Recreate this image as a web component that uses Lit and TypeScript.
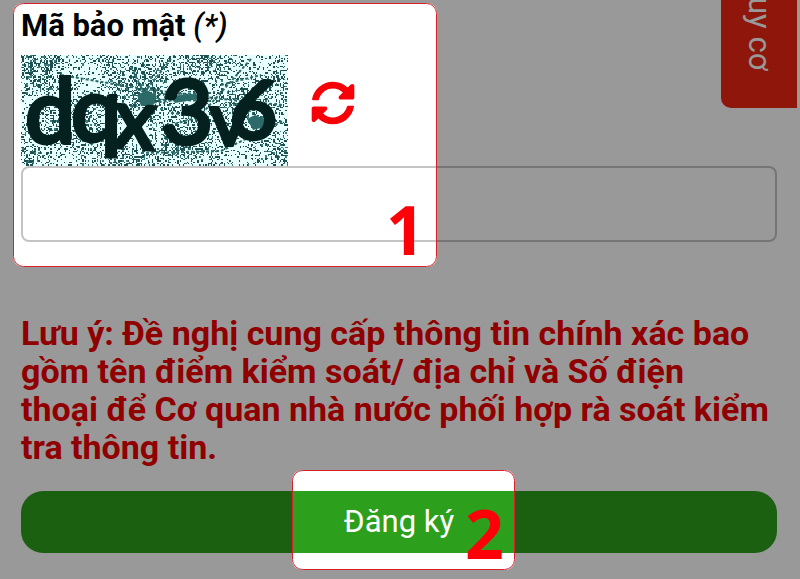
import { LitElement, html, svg, css } from "lit";
import { customElement, state } from "lit/decorators.js";

const COLS = 200;
const ROWS = 83;

/** Pixel noise behind the code characters, one path per shade. */
function noisePath(seed: number, density: number): string {
  let s = seed;
  const next = () => {
    s = (s * 1664525 + 1013904223) >>> 0;
    return s / 4294967296;
  };
  let d = "";
  for (let y = 0; y < ROWS; y++) {
    for (let x = 0; x < COLS; x++) {
      const wave = 0.06 * Math.sin(x / 17 + y / 9) + 0.06 * Math.cos(x / 11 - y / 13);
      if (next() < density + wave) d += `M${x} ${y}h1v1h-1z`;
    }
  }
  return d;
}

@customElement("captcha-picture")
export class CaptchaPicture extends LitElement {
  static properties = { seed: { type: Number } };
  declare seed: number;

  constructor() {
    super();
    this.seed = 7;
  }

  static styles = css`
    :host { display: block; width: 267px; height: 111px; }
    .pic { display: block; width: 100%; height: 100%; background: #e8ffff; }
    .dark { fill: #1d4f50; }
    .light { fill: #3c7c7c; }
    .streak { fill: none; stroke: #2c6a6a; stroke-width: 2; stroke-dasharray: 3 2; }
    .patch { fill: #2c6a6a; }
    .char { font-family: Lato, sans-serif; font-weight: 400; fill: #04201f; stroke: #04201f; stroke-width: 4; }
  `;

  render() {
    const chars = [
      { c: "d", x: 4, y: 88, size: 90, turn: 0 },
      { c: "q", x: 50, y: 86, size: 90, turn: 0 },
      { c: "x", x: 91, y: 92, size: 84, turn: 4 },
      { c: "3", x: 140, y: 89, size: 90, turn: 0 },
      { c: "v", x: 189, y: 90, size: 74, turn: 0 },
      { c: "6", x: 206, y: 80, size: 82, turn: 8 },
    ];
    return html`<svg class="pic" viewBox="0 0 267 111" role="img" aria-label="Mã bảo mật">
      <g transform="scale(1.335)" shape-rendering="crispEdges">
        <path class="light" d=${noisePath(this.seed, 0.1)}></path>
        <path class="dark" d=${noisePath(this.seed + 40, 0.24)}></path>
      </g>
      <path class="streak" d="M40 20 110 32 200 44 262 50M110 12 128 48 185 42M150 4 118 44 70 90M230 4 178 62 150 70M120 98 200 96 262 66M112 40 190 38M112 44 192 46M150 58 186 62M200 30 240 20"></path>
      <path class="patch" d="M116 40l10-5 10 6-4 10-12 0zM148 41l26-2 4 5-24 4zM226 64l8-4 10 4 0 8-12 3z"></path>
      ${chars.map((k) => svg`<text class="char" font-size=${k.size} transform="translate(${k.x} ${k.y}) rotate(${k.turn})">${k.c}</text>`)}
    </svg>`;
  }
}

@customElement("app-root")
export class AppRoot extends LitElement {
  @state() private seed = 7;

  static styles = css`
    :host {
      display: block;
      position: relative;
      min-height: 100vh;
      overflow: hidden;
      background: #fff;
      font-family: Roboto, "Liberation Sans", sans-serif;
      color: #000;
    }
    * { box-sizing: border-box; }
    .form { display: flex; flex-direction: column; padding: 8px 23px 26px 21px; }
    .label { font-size: 31px; line-height: 36px; font-weight: 700; }
    .star { font-weight: 500; font-style: italic; }
    .code { display: flex; align-items: center; gap: 21px; margin-top: 11px; }
    .reload { width: 48px; height: 48px; padding: 2px; margin-bottom: 16px; border: 0; background: none; color: #f80008; }
    .reload svg { display: block; width: 44px; height: 44px; }
    .field {
      width: 100%;
      height: 76px;
      padding: 0 16px;
      border: 2px solid #c4c4c4;
      border-radius: 8px;
      background: #fff;
      font: inherit;
      font-size: 31px;
      outline: 0;
    }
    .note { margin: 72px 0 0; color: #f00000; font-size: 34px; line-height: 38px; font-weight: 700; }
    .send {
      height: 62px;
      margin-top: 25px;
      border: 0;
      border-radius: 22px;
      background: #2ca01c;
      color: #fff;
      font: inherit;
      font-size: 31px;
      line-height: 36px;
    }
    .tab {
      position: absolute;
      top: 0;
      right: 3px;
      width: 76px;
      height: 108px;
      display: flex;
      align-items: center;
      justify-content: flex-end;
      flex-direction: column;
      padding-bottom: 38px;
      border-radius: 0 0 0 10px;
      background: #ed2612;
      color: #fff;
      font-size: 31px;
      line-height: 36px;
      text-decoration: none;
    }
    .tab span { writing-mode: vertical-rl; white-space: nowrap; }
    .shade { position: absolute; inset: 0; width: 100%; height: 100%; pointer-events: none; }
    .ring { fill: none; stroke: #d8202a; }
    .num { fill: #ff0008; font: 700 68px "Open Sans", sans-serif; }
  `;

  private reload() {
    this.seed += 1;
  }

  render() {
    return html`
      <form class="form" @submit=${(e: Event) => e.preventDefault()}>
        <label class="label" for="code">Mã bảo mật <span class="star">(*)</span></label>
        <div class="code">
          <captcha-picture .seed=${this.seed}></captcha-picture>
          <button class="reload" type="button" aria-label="Tải lại mã" @click=${this.reload}>
            <svg viewBox="0 0 512 512" fill="currentColor">
              <path d="M370.72 133.28C339.458 104.008 298.888 87.962 255.848 88c-77.458.068-144.328 53.178-162.791 126.85-1.344 5.363-6.122 9.15-11.651 9.15H24.103c-7.498 0-13.194-6.807-11.807-14.176C33.933 94.924 134.813 8 256 8c66.448 0 126.791 26.136 171.315 68.685L463.03 40.97C478.149 25.851 504 36.559 504 57.941V192c0 13.255-10.745 24-24 24H345.941c-21.382 0-32.09-25.851-16.971-40.971l41.75-41.749zM32 296h134.059c21.382 0 32.09 25.851 16.971 40.971l-41.75 41.75c31.262 29.273 71.835 45.319 114.876 45.28 77.418-.07 144.315-53.144 162.787-126.849 1.344-5.363 6.122-9.15 11.651-9.15h57.304c7.498 0 13.194 6.807 11.807 14.176C478.067 417.076 377.187 504 256 504c-66.448 0-126.791-26.136-171.315-68.685L48.97 471.03C33.851 486.149 8 475.441 8 454.059V320c0-13.255 10.745-24 24-24z"></path>
            </svg>
          </button>
        </div>
        <input class="field" id="code" type="text" autocomplete="off" />
        <p class="note">Lưu ý: Đề nghị cung cấp thông tin chính xác bao gồm tên điểm kiểm soát/ địa chỉ và Số điện thoại&nbsp;để Cơ quan nhà nước phối hợp rà soát kiểm tra thông tin.</p>
        <button class="send" type="submit">Đăng ký</button>
      </form>
      <a class="tab" href="#"><span>uy cơ</span></a>
      <svg class="shade">
        <mask id="holes">
          <rect width="100%" height="100%" fill="#fff"></rect>
          <rect x="13" y="3" width="424" height="264" rx="10" fill="#000"></rect>
          <svg x="50%" overflow="visible"><rect x="-108" y="470" width="223" height="100" rx="10" fill="#000"></rect></svg>
        </mask>
        <rect width="100%" height="100%" fill="#000" fill-opacity="0.4" mask="url(#holes)"></rect>
        <rect class="ring" x="13.5" y="3.5" width="423" height="263" rx="10"></rect>
        <text class="num" x="386" y="255">1</text>
        <svg x="50%" overflow="visible">
          <rect class="ring" x="-107.5" y="470.5" width="222" height="99" rx="10"></rect>
          <text class="num" x="65" y="559">2</text>
        </svg>
      </svg>
    `;
  }
}
